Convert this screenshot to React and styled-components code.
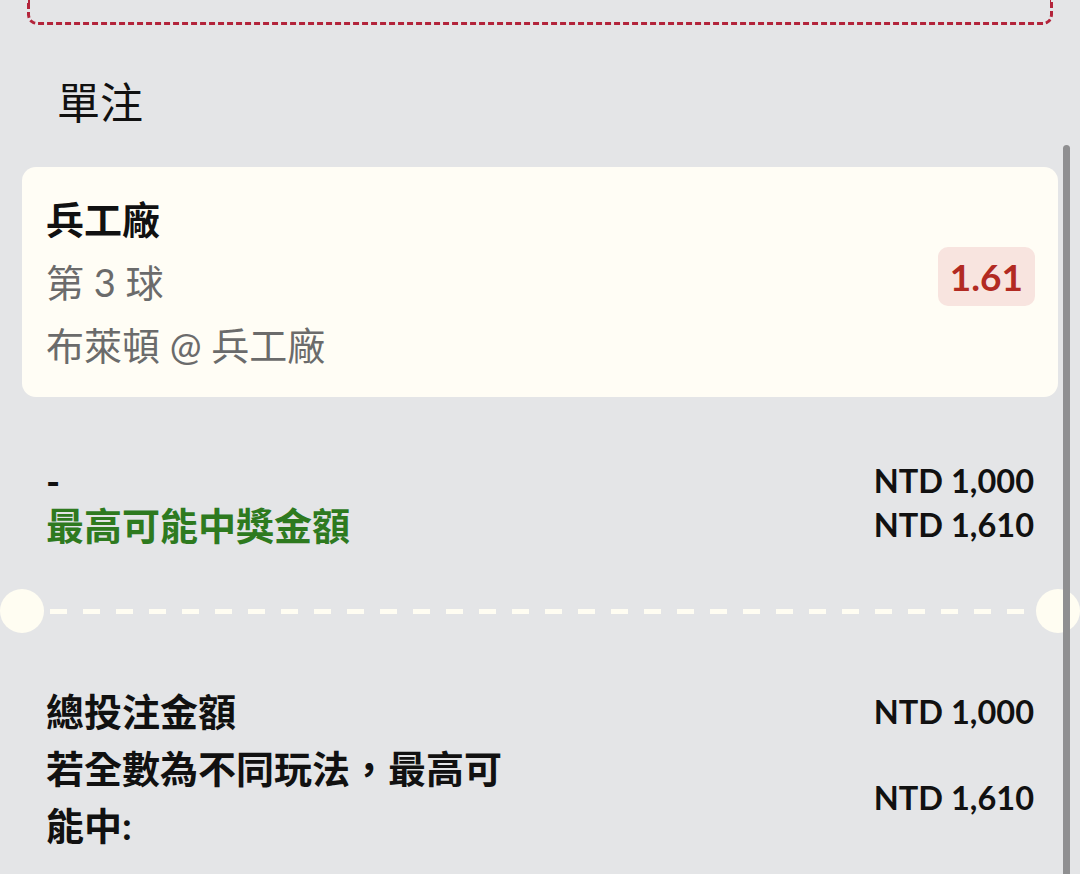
import React from "react";
import styled, { createGlobalStyle } from "styled-components";

const GlobalStyle = createGlobalStyle`
  body {
    margin: 0;
    background: #e4e5e7;
    font-family: Lato, "Noto Sans CJK TC", sans-serif;
    color: #111;
  }
`;

const Page = styled.div`
  position: relative;
  min-height: 874px;
  overflow: hidden;
`;

const DashedFrame = styled.div`
  height: 22px;
  margin: 0 27px;
  border: 3px dashed #b3243b;
  border-top: none;
  border-radius: 0 0 10px 10px;
`;

const Title = styled.h2`
  margin: 45px 0 0 57px;
  font-family: "Noto Sans CJK TC", sans-serif;
  font-size: 43px;
  font-weight: 400;
  line-height: 60px;
`;

const Content = styled.div`
  padding: 0 22px;
`;

const Card = styled.div`
  margin-top: 37px;
  display: flex;
  align-items: center;
  justify-content: space-between;
  background: #fffdf5;
  border-radius: 14px;
  padding: 21px 23px 20px 24px;
`;

const BetInfo = styled.div`
  display: flex;
  flex-direction: column;
`;

const BetLine = styled.div`
  font-size: 38px;
  line-height: 63px;
  font-weight: ${(p) => (p.$strong ? 700 : 400)};
  color: ${(p) => (p.$strong ? "#111" : "#6b6b6b")};
  white-space: pre;
`;

const OddsBadge = styled.div`
  margin-top: -12px;
  padding: 0 12px;
  height: 59px;
  display: flex;
  align-items: center;
  background: #f8e4df;
  border-radius: 10px;
  color: #b22a22;
  font-family: Lato, sans-serif;
  font-weight: 700;
  font-size: 37px;
`;

const Rows = styled.div`
  margin-top: ${(p) => p.$top}px;
  padding: 0 24px;
  display: flex;
  flex-direction: column;
`;

const Row = styled.div`
  display: flex;
  align-items: center;
  justify-content: space-between;
  line-height: ${(p) => p.$lh}px;
`;

const Label = styled.div`
  max-width: 470px;
  font-size: 38px;
  font-weight: 700;
  color: ${(p) => p.$color || "#111"};
`;

const Amount = styled.div`
  font-family: Lato, sans-serif;
  font-size: 32.5px;
  font-weight: 700;
  white-space: nowrap;
`;

const Separator = styled.div`
  margin-top: 42px;
  display: flex;
  align-items: center;
  height: 44px;
`;

const Notch = styled.div`
  width: 44px;
  height: 44px;
  flex: none;
  border-radius: 50%;
  background: #fffdf2;
`;

const DashLine = styled.div`
  flex: 1;
  height: 5px;
  margin: 0 6px;
  background: repeating-linear-gradient(
    to right,
    #fffdf2 0 17px,
    transparent 17px 33px
  );
`;

const ScrollThumb = styled.div`
  position: absolute;
  top: 145px;
  bottom: 0;
  right: 10px;
  width: 7px;
  border-radius: 4px 4px 0 0;
  background: #8f8f91;
`;

export default function App() {
  return (
    <Page>
      <GlobalStyle />
      <DashedFrame />
      <Title>單注</Title>
      <Content>
        <Card>
          <BetInfo>
            <BetLine $strong>兵工廠</BetLine>
            <BetLine>第 3 球</BetLine>
            <BetLine>布萊頓 @ 兵工廠</BetLine>
          </BetInfo>
          <OddsBadge>1.61</OddsBadge>
        </Card>
        <Rows $top={62}>
          <Row $lh={44}>
            <Label>-</Label>
            <Amount>NTD 1,000</Amount>
          </Row>
          <Row $lh={44}>
            <Label $color="#2e7a1f">最高可能中獎金額</Label>
            <Amount>NTD 1,610</Amount>
          </Row>
        </Rows>
      </Content>
      <Separator>
        <Notch />
        <DashLine />
        <Notch />
      </Separator>
      <Content>
        <Rows $top={50}>
          <Row $lh={57}>
            <Label>總投注金額</Label>
            <Amount>NTD 1,000</Amount>
          </Row>
          <Row $lh={57}>
            <Label>若全數為不同玩法，最高可能中:</Label>
            <Amount>NTD 1,610</Amount>
          </Row>
        </Rows>
      </Content>
      <ScrollThumb />
    </Page>
  );
}
